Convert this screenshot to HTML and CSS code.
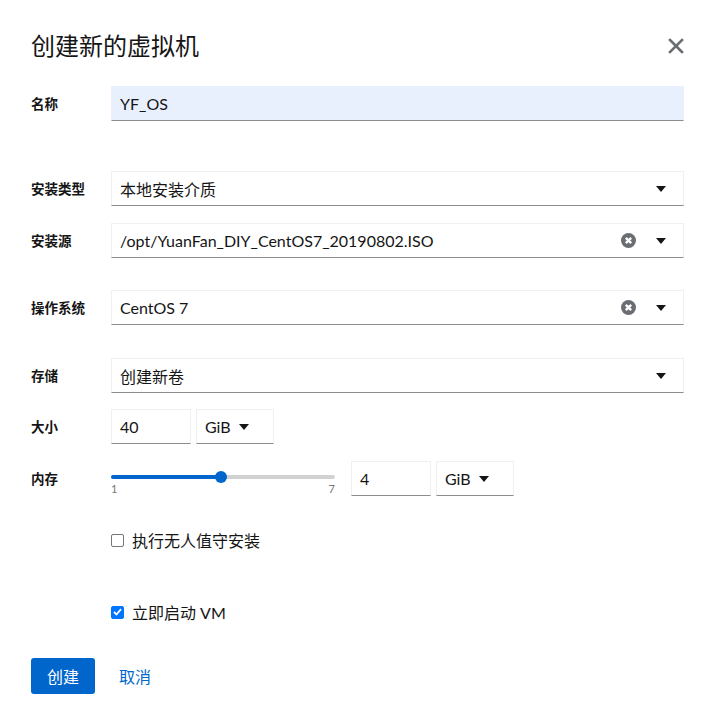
FILE: index.html
```html
<!DOCTYPE html>
<html lang="zh-CN">
<head>
<meta charset="utf-8">
<title>创建新的虚拟机</title>
<link rel="stylesheet" href="styles.css">
</head>
<body>
<div class="dialog">
  <header class="head">
    <h1 class="title">创建新的虚拟机</h1>
    <button class="close" aria-label="关闭">
      <svg width="16" height="16" viewBox="0 0 16 16"><path d="M2 2 L14 14 M14 2 L2 14" stroke="#6a6e73" stroke-width="2.6" stroke-linecap="square"/></svg>
    </button>
  </header>

  <div class="form">
    <div class="row r-name">
      <label class="label">名称</label>
      <div class="input filled">YF_OS</div>
    </div>

    <div class="row r-type">
      <label class="label">安装类型</label>
      <div class="select">
        <span class="val">本地安装介质</span>
        <span class="caret"></span>
      </div>
    </div>

    <div class="row r-src">
      <label class="label">安装源</label>
      <div class="select">
        <span class="val">/opt/YuanFan_DIY_CentOS7_20190802.ISO</span>
        <span class="clear"><svg width="15" height="15" viewBox="0 0 14 14"><circle cx="7" cy="7" r="7" fill="#6a6e73"/><path d="M4.5 4.5 L9.5 9.5 M9.5 4.5 L4.5 9.5" stroke="#fff" stroke-width="2.2"/></svg></span>
        <span class="caret"></span>
      </div>
    </div>

    <div class="row r-os">
      <label class="label">操作系统</label>
      <div class="select">
        <span class="val">CentOS 7</span>
        <span class="clear"><svg width="15" height="15" viewBox="0 0 14 14"><circle cx="7" cy="7" r="7" fill="#6a6e73"/><path d="M4.5 4.5 L9.5 9.5 M9.5 4.5 L4.5 9.5" stroke="#fff" stroke-width="2.2"/></svg></span>
        <span class="caret"></span>
      </div>
    </div>

    <div class="row r-store">
      <label class="label">存储</label>
      <div class="select">
        <span class="val">创建新卷</span>
        <span class="caret"></span>
      </div>
    </div>

    <div class="row r-size">
      <label class="label">大小</label>
      <div class="inline">
        <div class="input small">40</div>
        <div class="select unit"><span class="val">GiB</span><span class="caret"></span></div>
      </div>
    </div>

    <div class="row r-mem">
      <label class="label">内存</label>
      <div class="inline">
        <div class="slider">
          <div class="track"><div class="fill" style="width:49%"></div><div class="thumb" style="left:49%"></div></div>
          <div class="ticks"><span>1</span><span>7</span></div>
        </div>
        <div class="input small">4</div>
        <div class="select unit"><span class="val">GiB</span><span class="caret"></span></div>
      </div>
    </div>

    <div class="row r-unattended">
      <span></span>
      <label class="check"><span class="box"></span>执行无人值守安装</label>
    </div>

    <div class="row r-start">
      <span></span>
      <label class="check"><span class="box checked"><svg width="9" height="8" viewBox="0 0 9 8"><path d="M1 4 L3.5 6.5 L8 1.2" stroke="#fff" stroke-width="1.8" fill="none"/></svg></span>立即启动 VM</label>
    </div>
  </div>

  <footer class="actions">
    <button class="btn primary">创建</button>
    <button class="btn link">取消</button>
  </footer>
</div>
</body>
</html>
```

FILE: styles.css
```css
* { box-sizing: border-box; }
html, body { margin: 0; padding: 0; background: #fff; }
body {
  font-family: "Lato", "Noto Sans CJK SC", sans-serif;
  color: #151515;
  font-size: 16px;
}
.dialog { padding: 24px 29px 0 31px; }
.head {
  display: flex;
  justify-content: space-between;
  align-items: center;
  height: 44px;
}
.title {
  margin: 0;
  font-size: 24px;
  font-weight: 400;
  line-height: 44px;
}
.close {
  background: none;
  border: 0;
  padding: 0;
  width: 16px;
  height: 16px;
  display: flex;
}
.form { display: flex; flex-direction: column; }
.row {
  display: grid;
  grid-template-columns: 80px 1fr;
  align-items: center;
  min-height: 35px;
}
.r-name { margin-top: 18px; }
.r-type { margin-top: 50px; }
.r-src { margin-top: 17px; }
.r-os { margin-top: 32px; }
.r-store { margin-top: 33px; }
.r-size { margin-top: 16px; }
.r-mem { margin-top: 17px; }
.r-unattended { margin-top: 32px; min-height: 20px; }
.r-start { margin-top: 48px; min-height: 20px; }
.label {
  font-size: 13.5px;
  font-weight: 700;
  color: #151515;
  margin-top: -2px;
}
.input, .select {
  height: 35px;
  border: 1px solid #f0f0f0;
  border-bottom-color: #8a8d90;
  display: flex;
  align-items: center;
  padding: 0 8px;
  font-size: 16px;
  background: #fff;
}
.input.filled { background: #e8f0fe; border-color: #e8f0fe; border-bottom-color: #8a8d90; }
.select .val { flex: 1; white-space: nowrap; }
.caret {
  width: 0; height: 0;
  border-left: 5px solid transparent;
  border-right: 5px solid transparent;
  border-top: 6px solid #151515;
  margin-left: 20px;
  margin-right: 9px;
}
.clear { display: flex; }
.inline { display: flex; align-items: center; gap: 5px; }
.input.small { width: 80px; }
.select.unit { width: 78px; }
.select.unit .val { flex: 1; }
.select.unit .caret { margin-left: 0; margin-right: 16px; }
.slider {
  width: 224px;
  margin-right: 11px;
  position: relative;
  padding-top: 14px;
  height: 35px;
}
.track {
  position: relative;
  height: 4px;
  background: #d2d2d2;
  border-radius: 2px;
}
.fill { height: 4px; background: #06c; border-radius: 2px; }
.thumb {
  position: absolute;
  top: -4px;
  width: 12px; height: 12px;
  margin-left: -6px;
  border-radius: 50%;
  background: #06c;
}
.ticks {
  display: flex;
  justify-content: space-between;
  font-size: 11px;
  color: #737679;
  margin-top: 3px;
}
.check {
  display: flex;
  align-items: center;
  font-size: 16px;
  color: #151515;
}
.box {
  width: 13px; height: 13px;
  border: 1px solid #767676;
  border-radius: 2px;
  margin-right: 8px;
  display: flex;
  align-items: center;
  justify-content: center;
}
.box.checked { background: #0075ff; border-color: #0075ff; }
.actions {
  display: flex;
  align-items: center;
  margin-top: 34px;
  gap: 8px;
}
.btn {
  font-family: "Lato", "Noto Sans CJK SC", sans-serif;
  font-size: 16px;
  border: 0;
  height: 36px;
  padding: 0 16px;
  border-radius: 3px;
  cursor: pointer;
}
.primary { background: #06c; color: #fff; }
.link { background: none; color: #06c; }
```
